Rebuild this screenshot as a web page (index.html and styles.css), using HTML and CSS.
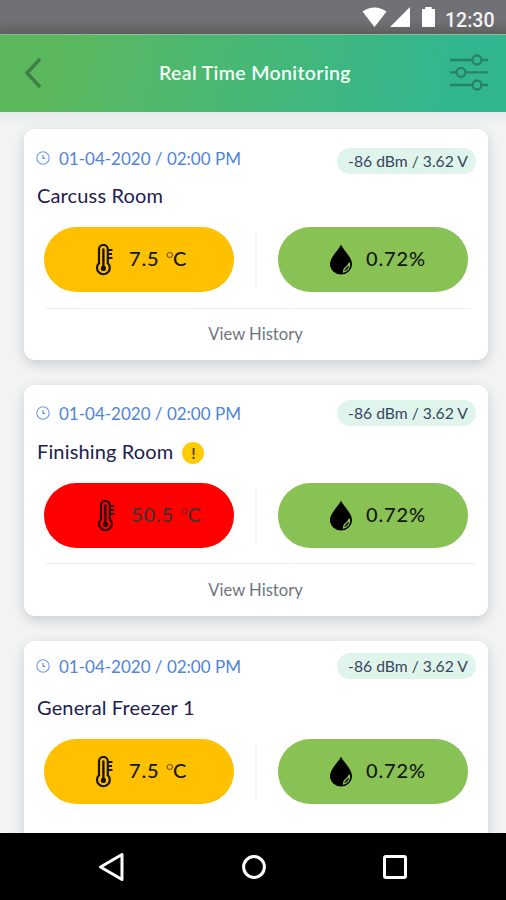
FILE: index.html
```
<!DOCTYPE html>
<html lang="en">
<head>
    <meta charset="UTF-8">
    <meta name="viewport" content="width=device-width, initial-scale=1.0">
    <title>Real Time Monitoring</title>
    <link rel="stylesheet" href="styles.css">
</head>
<body>
    <!-- shared icons -->
    <svg class="sprite" width="0" height="0">
      <symbol id="clock" viewBox="0 0 14 14">
        <circle cx="7" cy="7" r="6.2" fill="none" stroke="#6f9ae2" stroke-width="1.1"/>
        <path d="M7 4v3.4h2.2" fill="none" stroke="#5b8bdc" stroke-width="1.1"/>
      </symbol>
      <symbol id="thermometer" viewBox="0 0 18 32">
        <path d="M4 20V5.4a4.4 4.4 0 0 1 8.8 0V20" fill="none" stroke="currentColor" stroke-width="2.2"/>
        <path d="M4 19.2a6.4 6.4 0 1 0 8.800 0" fill="none" stroke="currentColor" stroke-width="2.2"/>
        <path d="M8.400 5.500v18" stroke="currentColor" stroke-width="2.4" stroke-linecap="round"/>
        <circle cx="8.400" cy="24.400" r="2.600" fill="currentColor"/>
        <path d="M12.500 6h5M12.500 10h4.500M12.500 14h5" stroke="currentColor" stroke-width="2.2"/>
      </symbol>
      <symbol id="drop" viewBox="0 0 24 31">
        <path d="M12 0.5C13.5 5 23 13 23 20a11 10.5 0 0 1-22 0C1 13 10.5 5 12 0.5z" fill="currentColor"/>
        <path d="M20.500 18.800c.8 4.800-2 8.200-5.800 9.200-1-4.300 4.200-4.500 5.800-9.200z" fill="none" stroke="#88c254" stroke-width="1.300"/>
      </symbol>
    </svg>

    <div class="screen">
      <div class="statusbar">
        <svg class="wifi" width="25" height="20" viewBox="0 0 27 20" preserveAspectRatio="none"><path d="M0.5 4.5Q13.5-3.5 26.5 4.5L13.5 20z" fill="#fff"/></svg>
        <svg class="signal" width="20" height="20" viewBox="0 0 20 20"><path d="M20 0v20H0z" fill="#fff"/></svg>
        <svg class="battery" width="13" height="20" viewBox="0 0 14 20" preserveAspectRatio="none"><path d="M3.5 0h7v2H14v18H0V2h3.5z" fill="#fff"/></svg>
        <span class="time">12:30</span>
      </div>

      <div class="header">
        <svg class="back" width="18" height="32" viewBox="0 0 18 32"><path d="M16 2L3 16l13 14" fill="none" stroke="#3d8048" stroke-width="3.6"/></svg>
        <h1>Real Time Monitoring</h1>
        <svg class="filter" width="38" height="38" viewBox="0 0 38 38">
          <g fill="none" stroke="#268266" stroke-width="2.3">
            <path d="M0 6h22.500M31.500 6H38M0 18.300h6.500M15.500 18.300H38M0 31h22.500M31.500 31H38"/>
            <circle cx="27" cy="6" r="4.500"/>
            <circle cx="11" cy="18.300" r="4.500"/>
            <circle cx="27" cy="31" r="4.500"/>
          </g>
        </svg>
      </div>

      <div class="content">
        <div class="card first">
          <div class="card-top">
            <div class="date"><svg width="14" height="14"><use href="#clock"/></svg><span>01-04-2020 / 02:00 PM</span></div>
            <div class="badge">-86 dBm / 3.62 V</div>
          </div>
          <h2>Carcuss Room</h2>
          <div class="readings">
            <div class="pill temp"><svg width="18" height="32"><use href="#thermometer"/></svg><span class="value">7.5 <i>°</i>C</span></div>
            <div class="separator"></div>
            <div class="pill humidity"><svg width="24" height="31"><use href="#drop"/></svg><span class="value">0.72%</span></div>
          </div>
          <div class="history">View History</div>
        </div>

        <div class="card second">
          <div class="card-top">
            <div class="date"><svg width="14" height="14"><use href="#clock"/></svg><span>01-04-2020 / 02:00 PM</span></div>
            <div class="badge">-86 dBm / 3.62 V</div>
          </div>
          <h2>Finishing Room<span class="warning">!</span></h2>
          <div class="readings">
            <div class="pill temp alert"><svg width="18" height="32"><use href="#thermometer"/></svg><span class="value">50.5 <i>°</i>C</span></div>
            <div class="separator"></div>
            <div class="pill humidity"><svg width="24" height="31"><use href="#drop"/></svg><span class="value">0.72%</span></div>
          </div>
          <div class="history">View History</div>
        </div>

        <div class="card third">
          <div class="card-top">
            <div class="date"><svg width="14" height="14"><use href="#clock"/></svg><span>01-04-2020 / 02:00 PM</span></div>
            <div class="badge">-86 dBm / 3.62 V</div>
          </div>
          <h2>General Freezer 1</h2>
          <div class="readings">
            <div class="pill temp"><svg width="18" height="32"><use href="#thermometer"/></svg><span class="value">7.5 <i>°</i>C</span></div>
            <div class="separator"></div>
            <div class="pill humidity"><svg width="24" height="31"><use href="#drop"/></svg><span class="value">0.72%</span></div>
          </div>
        </div>
      </div>

      <div class="navbar">
        <svg width="28" height="30" viewBox="0 0 28 30"><path d="M24 2.5v25L2.5 15z" fill="none" stroke="#fff" stroke-width="3" stroke-linejoin="round"/></svg>
        <svg width="28" height="30" viewBox="0 0 28 30"><circle cx="14" cy="15" r="10.4" fill="none" stroke="#fff" stroke-width="3"/></svg>
        <svg width="28" height="30" viewBox="0 0 28 30"><rect x="3.5" y="4.5" width="21" height="21" rx="1.5" fill="none" stroke="#fff" stroke-width="3"/></svg>
      </div>
    </div>
</body>
</html>
```
FILE: styles.css
```
* {
  box-sizing: border-box;
}

body {
  margin: 0;
  font-family: Lato, sans-serif;
}

svg {
  flex: none;
}

.sprite {
  display: none;
}

.screen {
  display: flex;
  flex-direction: column;
  width: 506px;
  height: 900px;
  overflow: hidden;
  background-color: #f1f3f4;
}

.statusbar {
  flex: none;
  display: flex;
  justify-content: flex-end;
  height: 34px;
  padding: 7px 11px 0 0;
  background: linear-gradient(#717074 60%, #626062);
}

.signal {
  margin-left: 3px;
}

.battery {
  margin-left: 12px;
}

.time {
  width: 50px;
  margin-left: 10px;
  font: 500 19.5px/27px Roboto, sans-serif;
  color: #f4f4f4;
  white-space: nowrap;
}

.header {
  flex: none;
  display: flex;
  justify-content: space-between;
  align-items: center;
  height: 78px;
  padding: 0 18px 2px 24px;
  background: linear-gradient(100deg, #5cb85d 10%, #32b68f 88%);
  border-top: 1px solid #8bbb97;
  box-shadow: 0 2px 10px rgba(60, 90, 80, 0.25);
}

h1 {
  margin: 0 0 0 18px;
  font-size: 19.5px;
  font-weight: 600;
  letter-spacing: 0.35px;
  color: #f3fff6;
}

.content {
  flex: 1;
  display: flex;
  flex-direction: column;
  gap: 25px;
  min-height: 0;
  overflow: hidden;
  padding: 17px 18px 0 24px;
  background: linear-gradient(#e4e9e9, #f1f3f4 14px);
}

.card {
  flex: none;
  height: 231px;
  border-radius: 11px;
  background-color: #fff;
  box-shadow: 0 4px 12px rgba(70, 90, 90, 0.24);
}

.card-top {
  display: flex;
  justify-content: space-between;
  height: 53px;
  padding: 16px 12px 0 12px;
}

.second .card-top {
  padding-top: 15px;
}

.third .card-top {
  padding-top: 12px;
}

.date {
  display: flex;
  align-items: center;
  gap: 9px;
  height: 26px;
  font-size: 17px;
  color: #4e84dc;
  white-space: nowrap;
}

.badge {
  width: 139px;
  height: 26px;
  padding-left: 3px;
  border-radius: 13px;
  background-color: #dff5eb;
  font-size: 15.7px;
  line-height: 26px;
  text-align: center;
  color: #3a4660;
  white-space: nowrap;
}

.first .badge {
  margin-top: 3px;
}

h2 {
  display: flex;
  align-items: center;
  height: 26px;
  margin: 0 0 19px;
  padding-left: 13px;
  font-size: 20px;
  font-weight: 400;
  letter-spacing: 0.15px;
  color: #1d2050;
}

.warning {
  width: 22px;
  height: 22px;
  margin: 3px 0 0 9px;
  border-radius: 50%;
  background-color: #ffcb05;
  font-size: 16px;
  font-weight: 700;
  line-height: 21px;
  text-align: center;
  color: #5a4300;
}

.readings {
  display: flex;
  align-items: center;
  justify-content: space-between;
  height: 65px;
  padding: 0 20px;
}

.pill {
  display: flex;
  align-items: center;
  width: 190px;
  height: 65px;
  border-radius: 33px;
  font-size: 20px;
  font-weight: 500;
  letter-spacing: 0.9px;
  color: #17150c;
  white-space: nowrap;
}

.value {
  padding-bottom: 3px;
}

.temp {
  gap: 16px;
  padding-left: 51px;
  background-color: #ffc000;
}

.temp i {
  font-style: normal;
  font-weight: 300;
  letter-spacing: -0.8px;
}

.alert {
  padding-left: 53px;
  background-color: #ff0000;
  color: #44302f;
}

.alert svg {
  color: #2a0505;
}

.humidity {
  gap: 13px;
  padding-left: 51px;
  background-color: #88c254;
}

.humidity svg {
  color: #000;
}

.separator {
  width: 2px;
  height: 56px;
  background-color: #f5f6f6;
}

.history {
  height: 50px;
  margin: 16px 18px 0 21px;
  padding-right: 4px;
  border-top: 1px solid #f0f1f2;
  font-size: 16.6px;
  line-height: 50px;
  text-align: center;
  color: #70737f;
}

.second .history {
  margin: 15px 12px 0 21px;
  padding: 1px 10px 0 0;
}

.navbar {
  flex: none;
  display: flex;
  justify-content: space-between;
  align-items: center;
  height: 67px;
  padding: 0 97px 0 98px;
  background-color: #000;
}
```
